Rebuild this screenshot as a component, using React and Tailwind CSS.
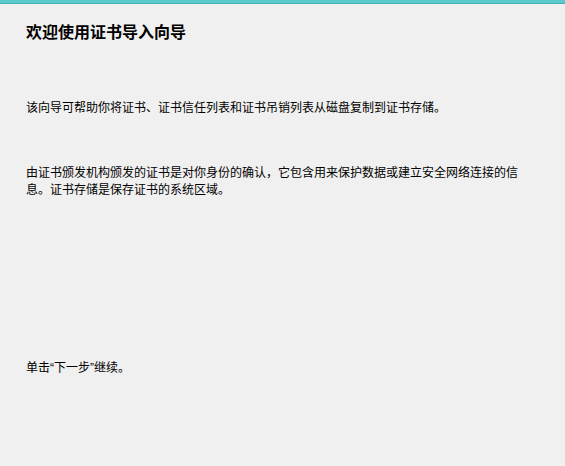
import React from 'react';

export default function App() {
  return (
    <div
      className="w-[565px] h-[466px] bg-[#f0f0f0] text-black overflow-hidden"
      style={{ fontFamily: '"Microsoft YaHei", "Noto Sans CJK SC", sans-serif' }}
    >
      <div className="h-[4px] bg-[#5ccacd] border-b border-[#4aaeb8]"></div>
      <div className="px-[26px]">
        <h1 className="pt-[16px] text-[16px] leading-[22px] font-bold">欢迎使用证书导入向导</h1>
        <p className="mt-[56px] text-[12px] leading-[17px]">
          该向导可帮助你将证书、证书信任列表和证书吊销列表从磁盘复制到证书存储。
        </p>
        <p className="mt-[48px] w-[500px] text-[12px] leading-[17px]">
          由证书颁发机构颁发的证书是对你身份的确认，它包含用来保护数据或建立安全网络连接的信息。证书存储是保存证书的系统区域。
        </p>
        <p className="mt-[161px] text-[12px] leading-[17px]">
          单击<span className="font-['Liberation_Sans']">“</span>下一步
          <span className="font-['Liberation_Sans']">”</span>继续。
        </p>
      </div>
    </div>
  );
}
